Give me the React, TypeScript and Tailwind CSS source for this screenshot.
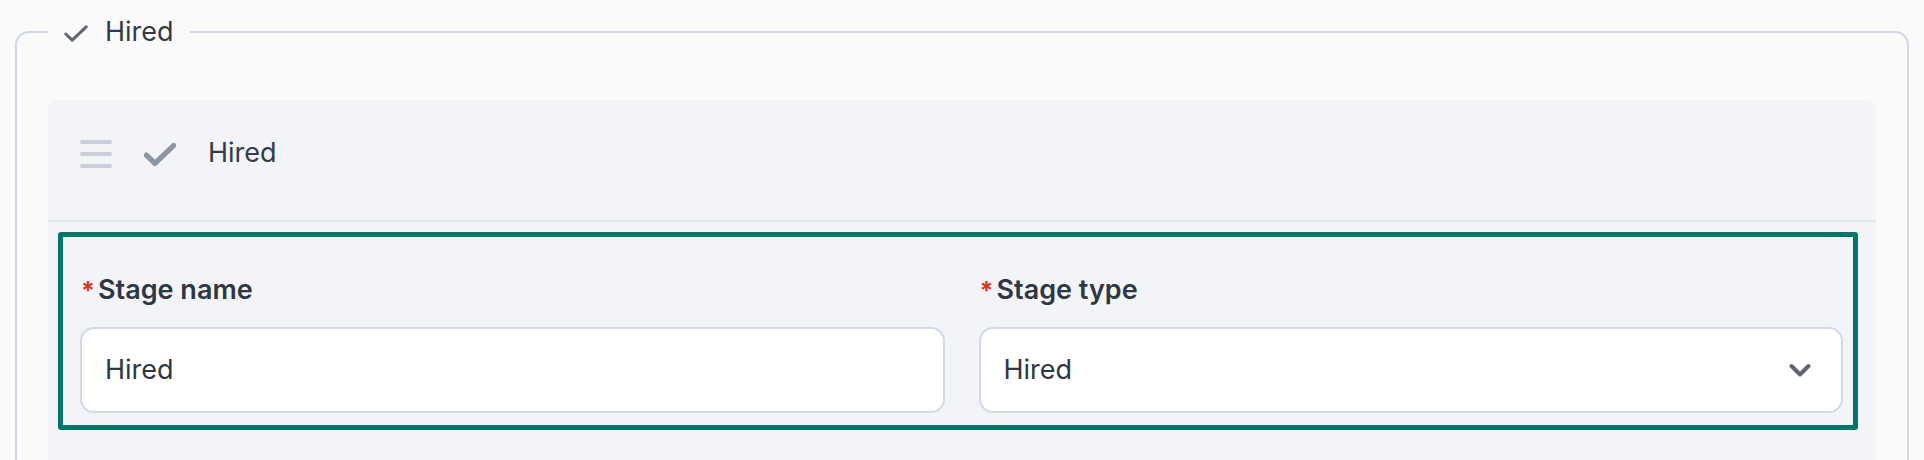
import React from 'react';

const CheckIcon = ({ className, stroke }: { className?: string; stroke: number }) => (
  <svg className={className} viewBox="0 0 24 17" fill="none" stroke="currentColor" strokeWidth={stroke} strokeLinecap="round" strokeLinejoin="round">
    <path d="M1.8 9 L8.2 15.2 L22.2 1.8" />
  </svg>
);

const Field = ({ label, value, select = false }: { label: string; value: string; select?: boolean }) => (
  <div className="flex flex-col">
    <label className="flex items-start h-[36px] text-[27px] leading-[36px] font-semibold text-[#2f3744]">
      <span className="text-[#d5361e] text-[25px] font-bold leading-[26px] mt-[6px] mr-[3px] pl-[1px]">*</span>
      {label}
    </label>
    <div className="mt-[19px] h-[86px] rounded-[14px] border-2 border-[#d3d9e6] bg-white flex items-center pl-[23px] pr-[30px]">
      {select ? (
        <>
          <span className="flex-1 text-[27px] text-[#2f3744]">{value}</span>
          <svg className="w-[22px] h-[15px] text-[#5e6675]" viewBox="0 0 22 15" fill="none" stroke="currentColor" strokeWidth={4} strokeLinecap="round" strokeLinejoin="round">
            <path d="M2.5 3 L11 11.5 L19.5 3" />
          </svg>
        </>
      ) : (
        <input
          readOnly
          value={value}
          className="w-full bg-transparent outline-none text-[27px] text-[#2f3744] font-['Inter',sans-serif]"
        />
      )}
    </div>
  </div>
);

export default function App() {
  return (
    <div className="h-[460px] overflow-hidden bg-[#fafafb] px-[15px] pt-[14px] font-['Inter',sans-serif]">
      <fieldset className="border-2 border-[#d1d8e5] rounded-[14px] px-[31px] pt-[50px] min-w-0">
        <legend className="px-[16px]">
          <span className="inline-flex items-center gap-[17px] h-[36px] text-[27px] leading-[36px] text-[#333b47]">
            <CheckIcon className="w-[24px] h-[17px] text-[#5f6675] mt-[2px]" stroke={3} />
            Hired
          </span>
        </legend>

        <div className="rounded-[8px] bg-[#f3f4f8] min-h-[400px]">
          {/* stage header */}
          <div className="h-[122px] pb-[12px] flex items-center gap-[32px] px-[32px] border-b-2 border-[#e4e7ee]">
            <div className="flex flex-col gap-[8px] w-[32px]">
              <span className="h-[4px] rounded-full bg-[#cbd0d8]" />
              <span className="h-[4px] rounded-full bg-[#cbd0d8]" />
              <span className="h-[4px] rounded-full bg-[#cbd0d8]" />
            </div>
            <CheckIcon className="w-[32px] h-[23px] text-[#8c96a5]" stroke={4} />
            <span className="text-[27px] leading-[36px] text-[#333b47] -mt-[3px]">Hired</span>
          </div>

          {/* highlighted form */}
          <div className="mt-[10px] ml-[10px] mr-[18px] border-[5px] border-[#00766a] rounded-[3px] pt-[35px] pb-[12px] pl-[17px] pr-[10px] grid grid-cols-2 gap-x-[34px]">
            <Field label="Stage name" value="Hired" />
            <Field label="Stage type" value="Hired" select />
          </div>
        </div>
      </fieldset>
    </div>
  );
}
